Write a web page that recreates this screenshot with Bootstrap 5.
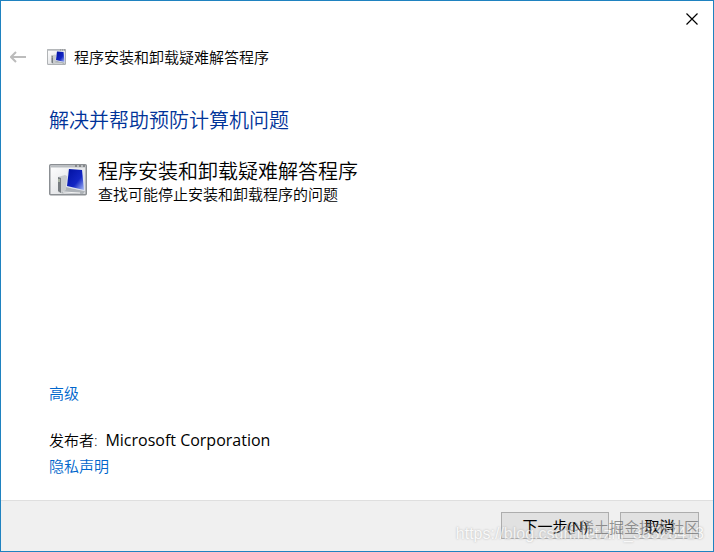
<!DOCTYPE html>
<html lang="zh-CN">
<head>
<meta charset="utf-8">
<meta name="viewport" content="width=device-width, initial-scale=1">
<title>程序安装和卸载疑难解答程序</title>
<link href="https://cdn.jsdelivr.net/npm/bootstrap@5.3.0/dist/css/bootstrap.min.css" rel="stylesheet">
<style>
body { font-family: "Open Sans", "Noto Sans CJK SC", sans-serif; font-size: 15px; line-height: 24px; font-weight: 350; color: #000; background: #fff; }
.wizard { border: 1px solid #1f82c0; }
.close-btn { width: 43px; height: 36px; color: #000; }
.back-btn { width: 34px; color: #b4b4b4; }
.wizard-body { padding: 0 48px; }
.wizard-title { font-size: 20px; line-height: 30px; color: #003399; font-weight: 350; margin-top: 37px; }
.item-title { font-size: 20px; line-height: 24px; font-weight: 350; }
.item-text { line-height: 20px; }
.item-row { gap: 11px; }
.publisher { font-weight: 350; }
.publisher-name { font-family: "Open Sans", sans-serif; font-size: 16px; font-weight: 400; }
.links-top { padding-bottom: 22px; }
.publisher, .links-end { line-height: 26px; }
.links-end { padding-bottom: 21px; }
.wizard a { color: #0066cc; }
.wizard-foot { background: #f0f0f0; border-top: 1px solid #dfdfdf; padding: 11px 14px 12px; gap: 11px; }
.dlg-btn { height: 27px; background: #e1e1e1; border: 1px solid #adadad; color: #000; font-size: 15px; font-weight: 400; line-height: 24px; }
.btn-next { width: 108px; }
.btn-cancel { width: 79px; }
.mark-url, .mark-site { line-height: 20px; pointer-events: none; white-space: nowrap; }
.mark-url { right: 9px; bottom: 7px; font: 16px/20px "Liberation Sans", sans-serif; color: #fff; opacity: .6; text-shadow: 0 0 2px #888; }
.mark-site { right: 14px; bottom: 14px; color: #555; opacity: .6; }
</style>
</head>
<body>
<svg class="position-absolute" width="0" height="0" aria-hidden="true">
  <defs>
    <linearGradient id="screen" x1="0" y1="0" x2="1" y2="1"><stop offset="0" stop-color="#0010a0"/><stop offset=".6" stop-color="#1326c4"/><stop offset="1" stop-color="#a9bdf5"/></linearGradient>
    <linearGradient id="pane" x1="0" y1="0" x2="1" y2="1"><stop offset="0" stop-color="#fff"/><stop offset="1" stop-color="#d4d6da"/></linearGradient>
  </defs>
  <symbol id="program" viewBox="0 0 38 32">
    <rect x=".75" y=".75" width="36.5" height="30" rx="1" fill="url(#pane)" stroke="#8b8f93" stroke-width="1.5"/>
    <path d="M1.500 1.500h35v2h-35z" fill="#b9bdc1"/>
    <path d="M26 2h2m2 0h2m2 0h2" stroke="#555"/>
    <path d="M9 13l7-2 4 2v13l-6 4-5-2z" fill="#c9ccce"/>
    <path d="M9 13l3 1v15l-3-2z" fill="#777c80"/>
    <path d="M10 15v3" stroke="#dce8c8"/>
    <path d="M17 23l13 3 6 1-2 3-22-1 5-3z" fill="#aeb3b8"/>
    <path d="M17 23l2-18 15 1 2 21z" fill="#dfe4ef"/>
    <path d="M18 22l2-17 13 1 2 20z" fill="url(#screen)"/>
    <path d="M14 28l17 1" stroke="#f4f4f4"/>
  </symbol>
</svg>
<main class="wizard position-relative d-flex flex-column min-vh-100">
  <div class="d-flex justify-content-end">
    <button type="button" class="btn close-btn p-0 border-0 rounded-0 d-flex align-items-center justify-content-center" aria-label="关闭">
      <svg width="12" height="12" viewBox="0 0 12 12" stroke="currentColor" stroke-width="1.200"><path d="M.5.5l11 11M11.500.5l-11 11"/></svg>
    </button>
  </div>
  <header class="d-flex align-items-center mt-2">
    <button type="button" class="btn back-btn p-0 border-0 me-2" aria-label="返回" disabled>
      <svg class="d-block mx-auto" width="16" height="12" viewBox="0 0 16 12" fill="none" stroke="#999" stroke-width="2"><path d="M16 6H1M6 1L1 6l5 5"/></svg>
    </button>
    <svg class="ms-1 me-2" width="19" height="16"><use href="#program"/></svg>
    <span>程序安装和卸载疑难解答程序</span>
  </header>
  <section class="wizard-body flex-grow-1 d-flex flex-column">
    <h1 class="wizard-title mb-0">解决并帮助预防计算机问题</h1>
    <div class="item-row d-flex mt-4">
      <svg class="flex-shrink-0 mt-1" width="38" height="32"><use href="#program"/></svg>
      <div>
        <h2 class="item-title mb-0">程序安装和卸载疑难解答程序</h2>
        <p class="item-text mb-0">查找可能停止安装和卸载程序的问题</p>
      </div>
    </div>
    <div class="mt-auto links-top"><a href="#" class="text-decoration-none">高级</a></div>
    <div class="publisher">发布者:&nbsp; <span class="publisher-name">Microsoft Corporation</span></div>
    <div class="links-end"><a href="#" class="text-decoration-none">隐私声明</a></div>
  </section>
  <footer class="wizard-foot position-relative d-flex justify-content-end">
    <button type="button" class="btn dlg-btn btn-next rounded-0 p-0">下一步(N)</button>
    <button type="button" class="btn dlg-btn btn-cancel rounded-0 p-0">取消</button>
    <span class="mark-url position-absolute">https://blog.csdn.net/zhi_33528413</span>
    <span class="mark-site position-absolute">@稀土掘金技术社区</span>
  </footer>
</main>
<script src="https://cdn.jsdelivr.net/npm/bootstrap@5.3.0/dist/js/bootstrap.bundle.min.js"></script>
</body>
</html>
